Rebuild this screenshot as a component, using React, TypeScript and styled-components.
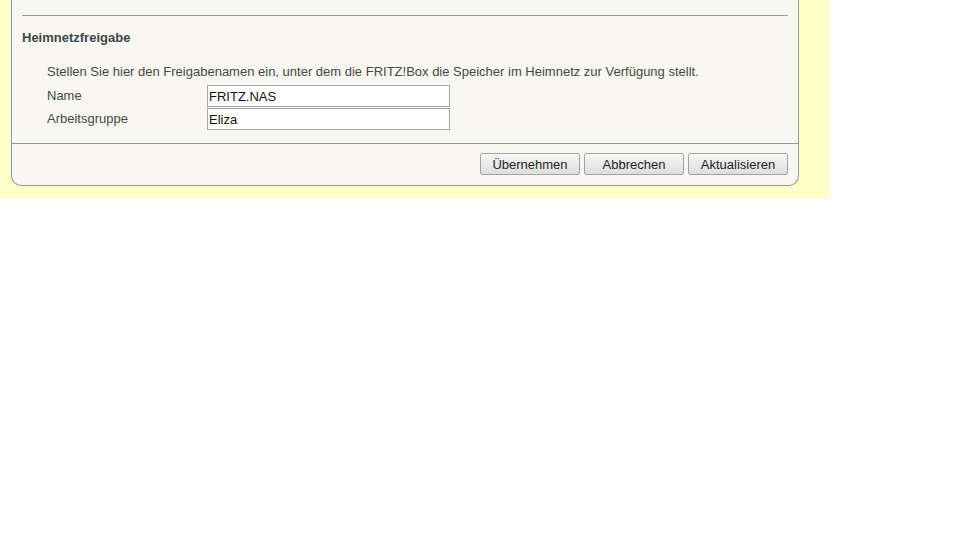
import React from "react";
import styled, { createGlobalStyle } from "styled-components";

const GlobalStyle = createGlobalStyle`
  body {
    margin: 0;
    background: #ffffff;
    font-family: "Liberation Sans", Arial, sans-serif;
  }
`;

const Page = styled.div`
  width: 830px;
  height: 199px;
  background: #ffffc8;
  padding-left: 11px;
  box-sizing: border-box;
`;

const Panel = styled.div`
  width: 788px;
  box-sizing: border-box;
  background: #f8f7f2;
  border: 1px solid #8d9ca4;
  border-top: none;
  border-radius: 0 0 10px 10px;
`;

const Content = styled.div`
  padding: 15px 10px 13px 10px;
`;

const Rule = styled.div`
  height: 1px;
  background: #8fa3a3;
`;

const Heading = styled.h2`
  margin: 14px 0 0;
  font-size: 13px;
  line-height: 16px;
  font-weight: bold;
  color: #3c464d;
`;

const Description = styled.p`
  margin: 18px 0 0 25px;
  font-size: 13px;
  line-height: 16px;
  color: #474747;
`;

const Form = styled.div`
  margin: 5px 0 0 25px;
  display: grid;
  grid-template-columns: 160px 243px;
  row-gap: 1px;
  align-items: center;
`;

const Label = styled.label`
  font-size: 13px;
  line-height: 16px;
  color: #474747;
`;

const Input = styled.input`
  box-sizing: border-box;
  width: 243px;
  height: 22px;
  margin: 0;
  padding: 0 1px;
  border: 1px solid #a6a6a6;
  background: #ffffff;
  font-family: "Liberation Sans", Arial, sans-serif;
  font-size: 13px;
  color: #111111;
  outline: none;
`;

const Footer = styled.div`
  border-top: 1px solid #8d9ca4;
  display: flex;
  justify-content: flex-end;
  gap: 4px;
  padding: 9px 10px 10px 0;
`;

const Button = styled.button`
  box-sizing: border-box;
  width: 100px;
  height: 22px;
  margin: 0;
  padding: 0;
  border: 1px solid #a3a3a3;
  border-radius: 2px;
  background: linear-gradient(#f6f6f6, #dedede);
  font-family: "Liberation Sans", Arial, sans-serif;
  font-size: 13px;
  color: #1e1e1e;
`;

const fields = [
  { label: "Name", value: "FRITZ.NAS" },
  { label: "Arbeitsgruppe", value: "Eliza" },
];

const App = () => (
  <>
    <GlobalStyle />
    <Page>
      <Panel>
        <Content>
          <Rule />
          <Heading>Heimnetzfreigabe</Heading>
          <Description>
            Stellen Sie hier den Freigabenamen ein, unter dem die FRITZ!Box die Speicher im Heimnetz zur Verfügung stellt.
          </Description>
          <Form>
            {fields.map(({ label, value }) => (
              <React.Fragment key={label}>
                <Label>{label}</Label>
                <Input defaultValue={value} />
              </React.Fragment>
            ))}
          </Form>
        </Content>
        <Footer>
          <Button>Übernehmen</Button>
          <Button>Abbrechen</Button>
          <Button>Aktualisieren</Button>
        </Footer>
      </Panel>
    </Page>
  </>
);

export default App;
